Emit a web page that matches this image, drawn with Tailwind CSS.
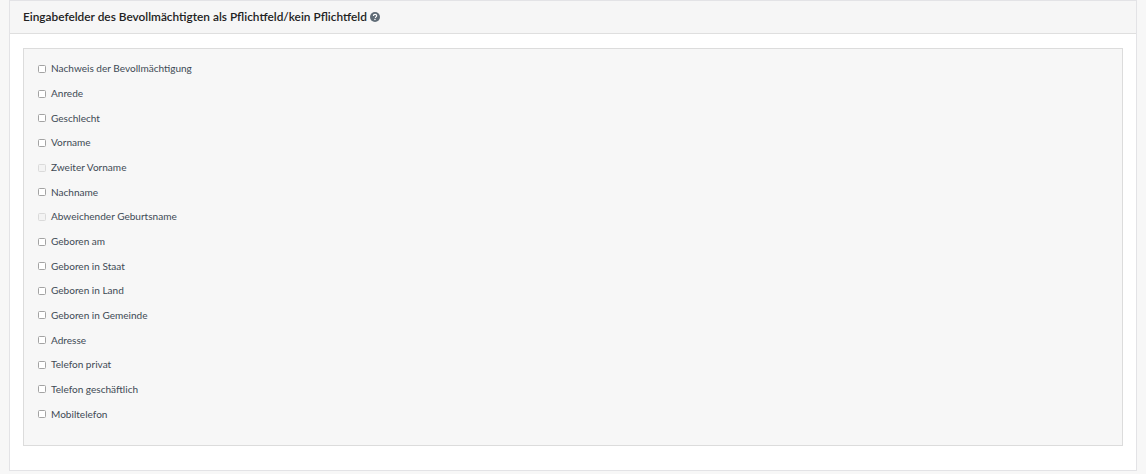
<!DOCTYPE html>
<html lang="de">
<head>
  <meta charset="UTF-8" />
  <title>Eingabefelder</title>
  <script src="https://cdn.jsdelivr.net/npm/@tailwindcss/browser@4"></script>
</head>
<body class="bg-[#f7f7f7] h-[474px] overflow-hidden font-['Lato',sans-serif]">
  <div class="mx-[9px] h-[471px] bg-white border border-[#e3e3e6]">
    <div class="h-[33px] bg-[#f6f6f6] border-b border-[#dfdfdf] pl-[13px] flex items-center gap-[3px] text-[11.85px] font-semibold text-[#222]">
      <span>Eingabefelder des Bevollmächtigten als Pflichtfeld/kein Pflichtfeld</span>
      <svg class="w-[10px] h-[10px]" viewBox="0 0 10 10">
        <circle cx="5" cy="5" r="5" fill="#5f6b76"/>
        <path d="M3.4 3.9c0-1 .7-1.6 1.7-1.6s1.6.6 1.6 1.4c0 1.2-1.3 1.2-1.3 2.2" fill="none" stroke="#fff" stroke-width="1.2"/>
        <rect x="4.3" y="6.8" width="1.3" height="1.3" fill="#fff"/>
      </svg>
    </div>
    <div class="mx-[13px] mt-[14px] h-[398px] bg-[#f7f7f7] border border-[#dcdcdc] pl-[14px] pt-[7.6px] text-[10.05px] text-[#404a55]">
      <label class="h-[24.67px] flex items-center gap-[5px]"><input type="checkbox" class="w-[8px] h-[8px] appearance-none bg-white border border-[#a3a3a3] rounded-[1.5px]" /> Nachweis der Bevollmächtigung</label>
      <label class="h-[24.67px] flex items-center gap-[5px]"><input type="checkbox" class="w-[8px] h-[8px] appearance-none bg-white border border-[#a3a3a3] rounded-[1.5px]" /> Anrede</label>
      <label class="h-[24.67px] flex items-center gap-[5px]"><input type="checkbox" class="w-[8px] h-[8px] appearance-none bg-white border border-[#a3a3a3] rounded-[1.5px]" /> Geschlecht</label>
      <label class="h-[24.67px] flex items-center gap-[5px]"><input type="checkbox" class="w-[8px] h-[8px] appearance-none bg-white border border-[#a3a3a3] rounded-[1.5px]" /> Vorname</label>
      <label class="h-[24.67px] flex items-center gap-[5px]"><input type="checkbox" disabled class="w-[8px] h-[8px] appearance-none bg-[#f3f3f3] border border-[#dadada] rounded-[1.5px]" /> Zweiter Vorname</label>
      <label class="h-[24.67px] flex items-center gap-[5px]"><input type="checkbox" class="w-[8px] h-[8px] appearance-none bg-white border border-[#a3a3a3] rounded-[1.5px]" /> Nachname</label>
      <label class="h-[24.67px] flex items-center gap-[5px]"><input type="checkbox" disabled class="w-[8px] h-[8px] appearance-none bg-[#f3f3f3] border border-[#dadada] rounded-[1.5px]" /> Abweichender Geburtsname</label>
      <label class="h-[24.67px] flex items-center gap-[5px]"><input type="checkbox" class="w-[8px] h-[8px] appearance-none bg-white border border-[#a3a3a3] rounded-[1.5px]" /> Geboren am</label>
      <label class="h-[24.67px] flex items-center gap-[5px]"><input type="checkbox" class="w-[8px] h-[8px] appearance-none bg-white border border-[#a3a3a3] rounded-[1.5px]" /> Geboren in Staat</label>
      <label class="h-[24.67px] flex items-center gap-[5px]"><input type="checkbox" class="w-[8px] h-[8px] appearance-none bg-white border border-[#a3a3a3] rounded-[1.5px]" /> Geboren in Land</label>
      <label class="h-[24.67px] flex items-center gap-[5px]"><input type="checkbox" class="w-[8px] h-[8px] appearance-none bg-white border border-[#a3a3a3] rounded-[1.5px]" /> Geboren in Gemeinde</label>
      <label class="h-[24.67px] flex items-center gap-[5px]"><input type="checkbox" class="w-[8px] h-[8px] appearance-none bg-white border border-[#a3a3a3] rounded-[1.5px]" /> Adresse</label>
      <label class="h-[24.67px] flex items-center gap-[5px]"><input type="checkbox" class="w-[8px] h-[8px] appearance-none bg-white border border-[#a3a3a3] rounded-[1.5px]" /> Telefon privat</label>
      <label class="h-[24.67px] flex items-center gap-[5px]"><input type="checkbox" class="w-[8px] h-[8px] appearance-none bg-white border border-[#a3a3a3] rounded-[1.5px]" /> Telefon geschäftlich</label>
      <label class="h-[24.67px] flex items-center gap-[5px]"><input type="checkbox" class="w-[8px] h-[8px] appearance-none bg-white border border-[#a3a3a3] rounded-[1.5px]" /> Mobiltelefon</label>
    </div>
  </div>
</body>
</html>
